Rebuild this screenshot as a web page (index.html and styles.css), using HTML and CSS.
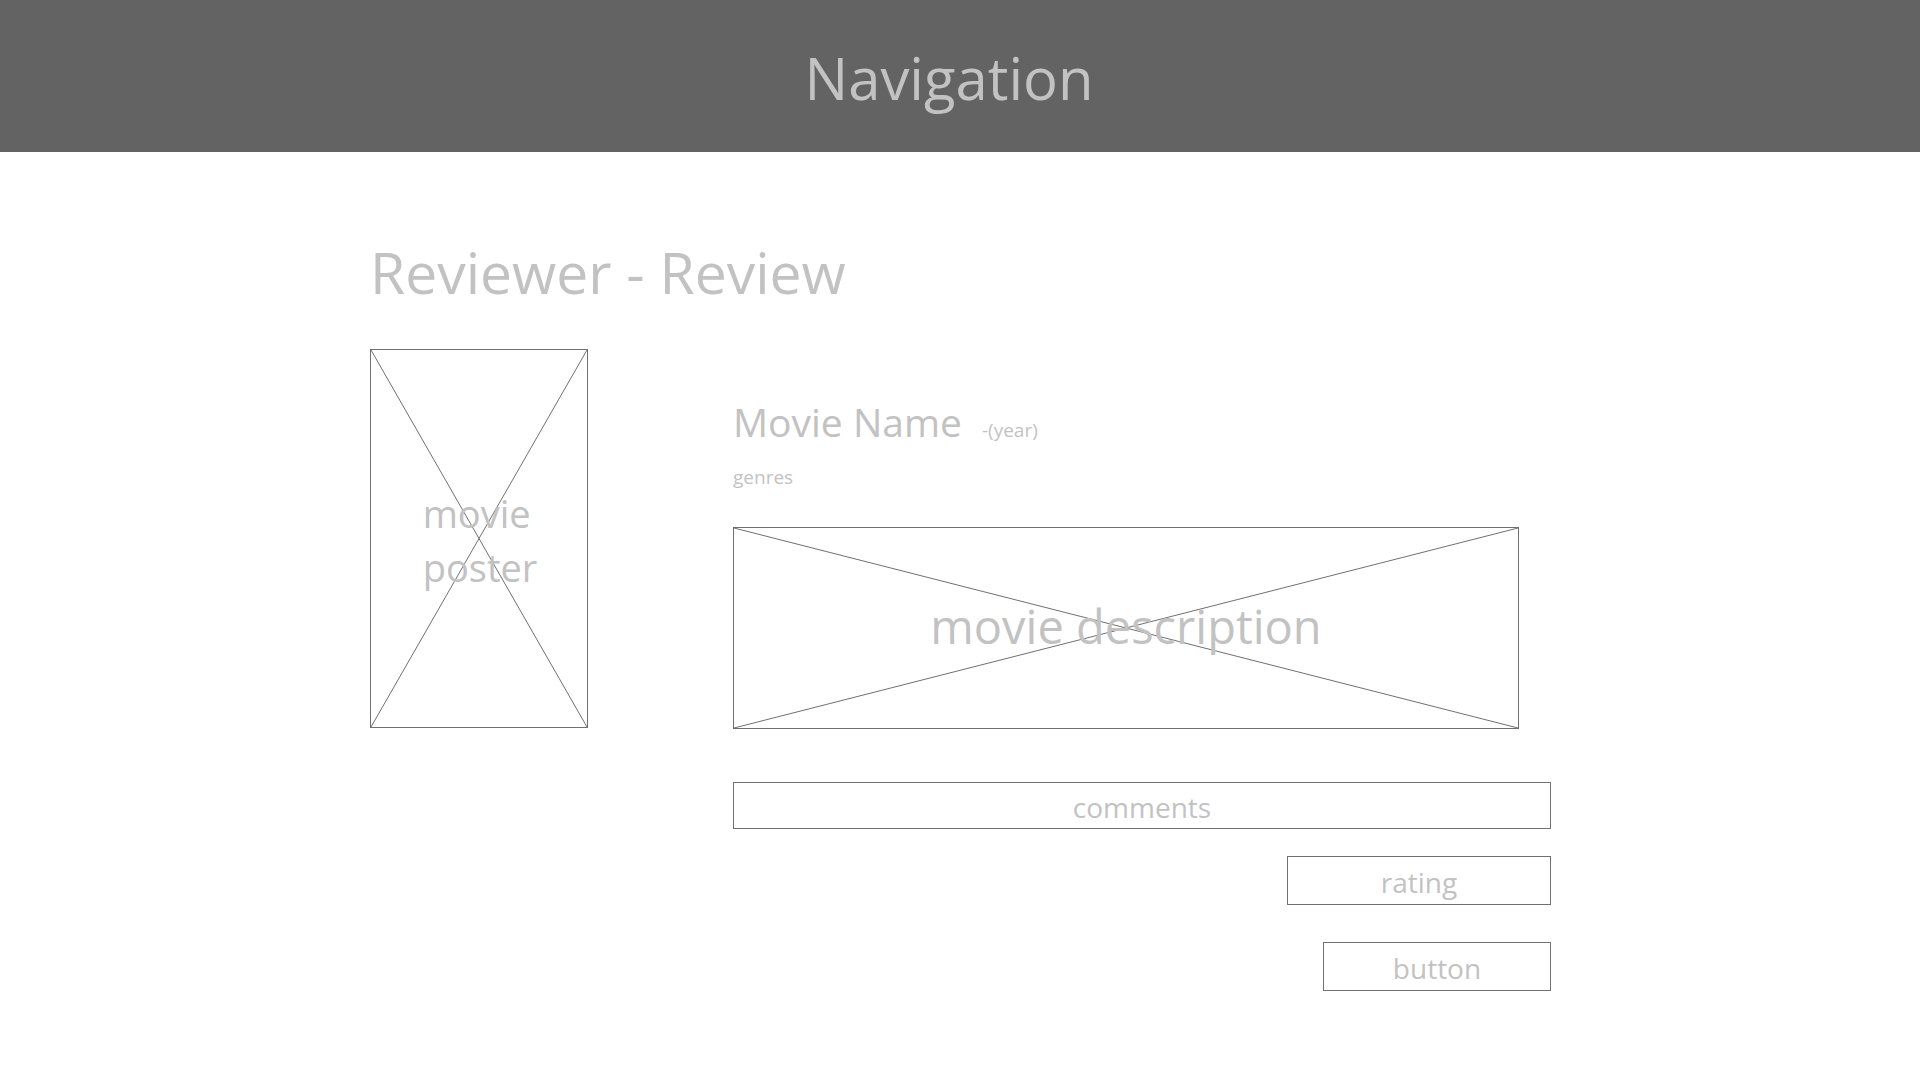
FILE: index.html
```html
<!DOCTYPE html>
<html lang="en">
<head>
<meta charset="utf-8">
<title>Reviewer - Review</title>
<link rel="stylesheet" href="styles.css">
</head>
<body>
<header class="nav">
  <div class="nav-title">Navigation</div>
</header>
<main class="page">
  <h1 class="page-title">Reviewer - Review</h1>
  <div class="content">
    <div class="poster placeholder">
      <svg class="cross" viewBox="0 0 100 100" preserveAspectRatio="none" aria-hidden="true">
        <line x1="0" y1="0" x2="100" y2="100" vector-effect="non-scaling-stroke"/>
        <line x1="100" y1="0" x2="0" y2="100" vector-effect="non-scaling-stroke"/>
      </svg>
      <span class="poster-label">movie<br>poster</span>
    </div>
    <div class="details">
      <div class="movie-head">
        <span class="movie-name">Movie Name</span>
        <span class="movie-year">-(year)</span>
      </div>
      <div class="genres">genres</div>
      <div class="description placeholder">
        <svg class="cross" viewBox="0 0 100 100" preserveAspectRatio="none" aria-hidden="true">
          <line x1="0" y1="0" x2="100" y2="100" vector-effect="non-scaling-stroke"/>
          <line x1="100" y1="0" x2="0" y2="100" vector-effect="non-scaling-stroke"/>
        </svg>
        <span class="description-label">movie description</span>
      </div>
      <div class="field comments">comments</div>
      <div class="field rating">rating</div>
      <div class="field button">button</div>
    </div>
  </div>
</main>
</body>
</html>
```
FILE: styles.css
```css
* { box-sizing: border-box; }
html, body { margin: 0; padding: 0; background: #ffffff; }
body {
  font-family: "Open Sans", "Noto Sans", sans-serif;
  color: #c2c2c2;
  width: 1920px;
  height: 1080px;
  overflow: hidden;
}
.nav {
  height: 152px;
  background: #636363;
  display: flex;
  justify-content: center;
  align-items: center;
}
.nav-title {
  font-size: 58px;
  line-height: 1;
  color: #c2c2c2;
  padding-top: 4px;
  padding-right: 22px;
}
.page {
  padding-left: 370px;
}
.page-title {
  margin: 0;
  padding-top: 90px;
  font-weight: 400;
  font-size: 57px;
  line-height: 60px;
  color: #c2c2c2;
}
.content {
  display: flex;
  align-items: flex-start;
  margin-top: 47px;
}
.placeholder {
  position: relative;
  border: 1px solid #707070;
  display: flex;
  align-items: center;
  justify-content: center;
}
.cross {
  position: absolute;
  inset: 0;
  width: 100%;
  height: 100%;
}
.cross line {
  stroke: #707070;
  stroke-width: 1;
}
.poster {
  width: 218px;
  height: 379px;
}
.poster-label {
  position: relative;
  font-size: 38px;
  line-height: 54px;
  text-align: left;
  margin-top: 2px;
  margin-left: 2px;
}
.details {
  margin-left: 145px;
  width: 818px;
  display: flex;
  flex-direction: column;
  padding-top: 53px;
}
.movie-head {
  display: flex;
  align-items: baseline;
  line-height: 1;
}
.movie-name {
  font-size: 39px;
}
.movie-year {
  font-size: 19px;
  margin-left: 20px;
}
.genres {
  font-size: 19px;
  line-height: 1;
  margin-top: 27px;
}
.description {
  width: 786px;
  height: 202px;
  margin-top: 40px;
}
.description-label {
  position: relative;
  font-size: 47px;
  line-height: 1;
  margin-top: -3px;
}
.field {
  border: 1px solid #707070;
  height: 49px;
  display: flex;
  align-items: center;
  justify-content: center;
  font-size: 28px;
  line-height: 1;
  padding-top: 3px;
  align-self: flex-end;
}
.comments {
  width: 818px;
  height: 47px;
  margin-top: 53px;
}
.rating {
  width: 264px;
  margin-top: 27px;
}
.button {
  width: 228px;
  margin-top: 37px;
}
```
